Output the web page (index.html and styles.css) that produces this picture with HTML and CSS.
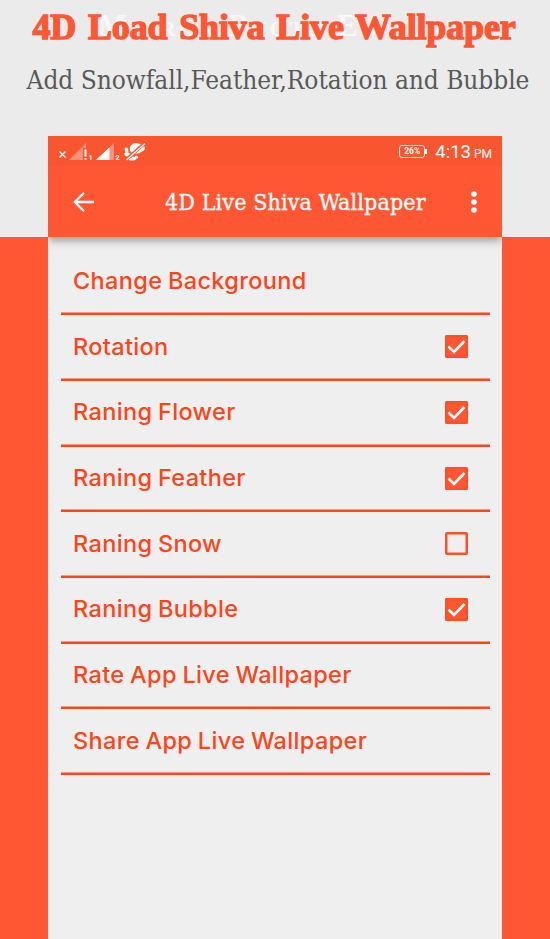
FILE: index.html
```
<!DOCTYPE html>
<html lang="en">
<head>
  <meta charset="utf-8" />
  <meta name="viewport" content="width=device-width, initial-scale=1.0" />
  <title>4D Live Shiva Wallpaper</title>
  <link rel="stylesheet" href="styles.css">
</head>
<body>
  <header class="promo">
    <div class="ghost" aria-hidden="true">Mirror Photo Editor</div>
    <h1>4D Load Shiva Live Wallpaper</h1>
    <p>Add Snowfall,Feather,Rotation and Bubble</p>
  </header>

  <main class="phone">
    <!-- Status bar -->
    <div class="status-bar">
      <svg class="signals" width="90" height="20" viewBox="0 0 90 20">
        <path d="M2.500 9.500l6 6M8.500 9.500l-6 6" stroke="#fff" stroke-width="1.300" />
        <path d="M12 18L29 1v5h-3v12z" fill="#fff" opacity=".35" />
        <path d="M28.500 7.500v7M28.500 16v2" stroke="#fff" stroke-width="2" />
        <text x="31.500" y="17.500">1</text>
        <path d="M39 18L57 1v17z" fill="#fff" opacity=".35" />
        <path d="M39 18L52.500 5.200v12.800z" fill="#fff" />
        <text x="58.500" y="17.500">2</text>
        <g fill="#fff">
          <path d="M73 9C72 4 75 1 79 1c2 0 3 1 4 1 3 0 5 2 5 5-1 2-3 2-4 3-2 2-8 3-11-1z" />
          <ellipse cx="69.500" cy="8" rx="1.800" ry="2.600" transform="rotate(-20 69.500 8)" />
          <ellipse cx="70.500" cy="12.500" rx="3.200" ry="2" transform="rotate(20 70.500 12.500)" />
          <ellipse cx="75" cy="16.500" rx="4" ry="2" />
          <ellipse cx="79.500" cy="15" rx="1.800" ry="1.500" />
        </g>
        <path d="M69 18L88 1" stroke="#f95630" stroke-width="3.600" />
        <path d="M69.500 18L88 1.500" stroke="#fff" stroke-width="1.400" />
      </svg>
      <div class="status-right">
        <div class="battery">26%</div>
        <div class="clock">4:13<small>PM</small></div>
      </div>
    </div>

    <!-- App bar -->
    <div class="app-bar">
      <svg width="22" height="22" viewBox="0 0 22 22" fill="none" stroke="#fff" stroke-width="2.300">
        <path d="M21 11H2.500M11 1.800L1.800 11l9.200 9.200" />
      </svg>
      <h2>4D Live Shiva Wallpaper</h2>
      <svg width="6" height="22" viewBox="0 0 6 22" fill="#fff">
        <circle cx="3" cy="3" r="2.800" />
        <circle cx="3" cy="11" r="2.800" />
        <circle cx="3" cy="19" r="2.800" />
      </svg>
    </div>

    <!-- Settings -->
    <ul class="settings">
      <li><span>Change Background</span></li>
      <li><span>Rotation</span><i class="check on"><svg viewBox="0 0 23 23"><path d="M3.500 11.500l5.500 5.500L19.500 6" /></svg></i></li>
      <li><span>Raning Flower</span><i class="check on"><svg viewBox="0 0 23 23"><path d="M3.500 11.500l5.500 5.500L19.500 6" /></svg></i></li>
      <li><span>Raning Feather</span><i class="check on"><svg viewBox="0 0 23 23"><path d="M3.500 11.500l5.500 5.500L19.500 6" /></svg></i></li>
      <li><span>Raning Snow</span><i class="check"></i></li>
      <li><span>Raning Bubble</span><i class="check on"><svg viewBox="0 0 23 23"><path d="M3.500 11.500l5.500 5.500L19.500 6" /></svg></i></li>
      <li><span>Rate App Live Wallpaper</span></li>
      <li><span>Share App Live Wallpaper</span></li>
    </ul>
  </main>
</body>
</html>
```
FILE: styles.css
```
* {
  box-sizing: border-box;
}
body {
  margin: 0;
  height: 939px;
  overflow: hidden;
  /* Light band on top, orange below */
  background: linear-gradient(#ebebeb 237px, #ff5733 237px);
  display: flex;
  flex-direction: column;
  align-items: center;
}

.promo {
  position: relative;
  width: 550px;
  height: 136px;
  text-align: center;
  white-space: nowrap;
}
.ghost {
  position: absolute;
  top: 8px;
  left: 98px;
  font: bold 31px/36px "Liberation Serif", serif;
  font-variant: small-caps;
  letter-spacing: 2.8px;
  color: #f8f8f8;
}
.promo h1 {
  position: relative;
  margin: 0;
  padding-top: 6px;
  padding-right: 2px;
  font: bold 36px/42px "Liberation Serif", serif;
  letter-spacing: -0.15px;
  word-spacing: 3px;
  color: #ff5733;
  -webkit-text-stroke: 1.4px #ff5733;
}
.promo p {
  margin: 0;
  padding-top: 15px;
  padding-left: 6px;
  font: 26px/34px "DejaVu Serif Condensed", "DejaVu Serif", serif;
  letter-spacing: -0.04px;
  color: #595959;
}

.phone {
  width: 454px;
  height: 803px;
  background: #efefef;
}

.status-bar {
  display: flex;
  justify-content: space-between;
  height: 30px;
  padding: 6px 10px 0 9px;
  background: #f95630;
  color: #fff;
  font-family: Roboto, sans-serif;
}
.signals text {
  font: bold 7px Roboto, sans-serif;
  fill: #fff;
}
.status-right {
  display: flex;
  gap: 10px;
}
.battery {
  position: relative;
  width: 26px;
  height: 13px;
  margin-top: 3px;
  border: 1.5px solid #fff;
  border-radius: 3px;
  font: bold 8.5px/11px Roboto, sans-serif;
  text-align: center;
}
.battery::after {
  content: "";
  position: absolute;
  right: -3px;
  top: 3px;
  width: 2px;
  height: 5px;
  background: #fff;
}
.clock {
  font-size: 18.5px;
  line-height: 20px;
}
.clock small {
  margin-left: 3px;
  font-size: 12px;
}

.app-bar {
  display: flex;
  align-items: center;
  height: 71px;
  padding: 0 25px;
  background: #ff5733;
  box-shadow: 0 3px 9px rgba(0, 0, 0, 0.4);
  clip-path: inset(0 0 -20px 0);
}
.app-bar h2 {
  margin: 0 auto 0 70px;
  font: 23px/30px "DejaVu Serif Condensed", "DejaVu Serif", serif;
  letter-spacing: 0.13px;
  white-space: nowrap;
  color: #fff;
  -webkit-text-stroke: 0.3px #fff;
}

.settings {
  margin: 12.6px 12.5px 0;
  padding: 0;
  list-style: none;
}
.settings li {
  display: flex;
  align-items: center;
  justify-content: space-between;
  height: 65.7px;
  padding: 0 21.5px 3px 12.5px;
  box-shadow: inset 0 -2.5px #fd451b;
  font: 500 23.5px/28px Inter, sans-serif;
  letter-spacing: 0.35px;
  word-spacing: -1px;
  color: #fd451b;
  white-space: nowrap;
}
.check {
  width: 23px;
  height: 23px;
  box-shadow: inset 0 0 0 2.5px #fd5029;
  border-radius: 2px;
}
.check.on {
  background: #ff5733;
}
.check svg {
  display: block;
  fill: none;
  stroke: #fff;
  stroke-width: 2.6;
}
```
